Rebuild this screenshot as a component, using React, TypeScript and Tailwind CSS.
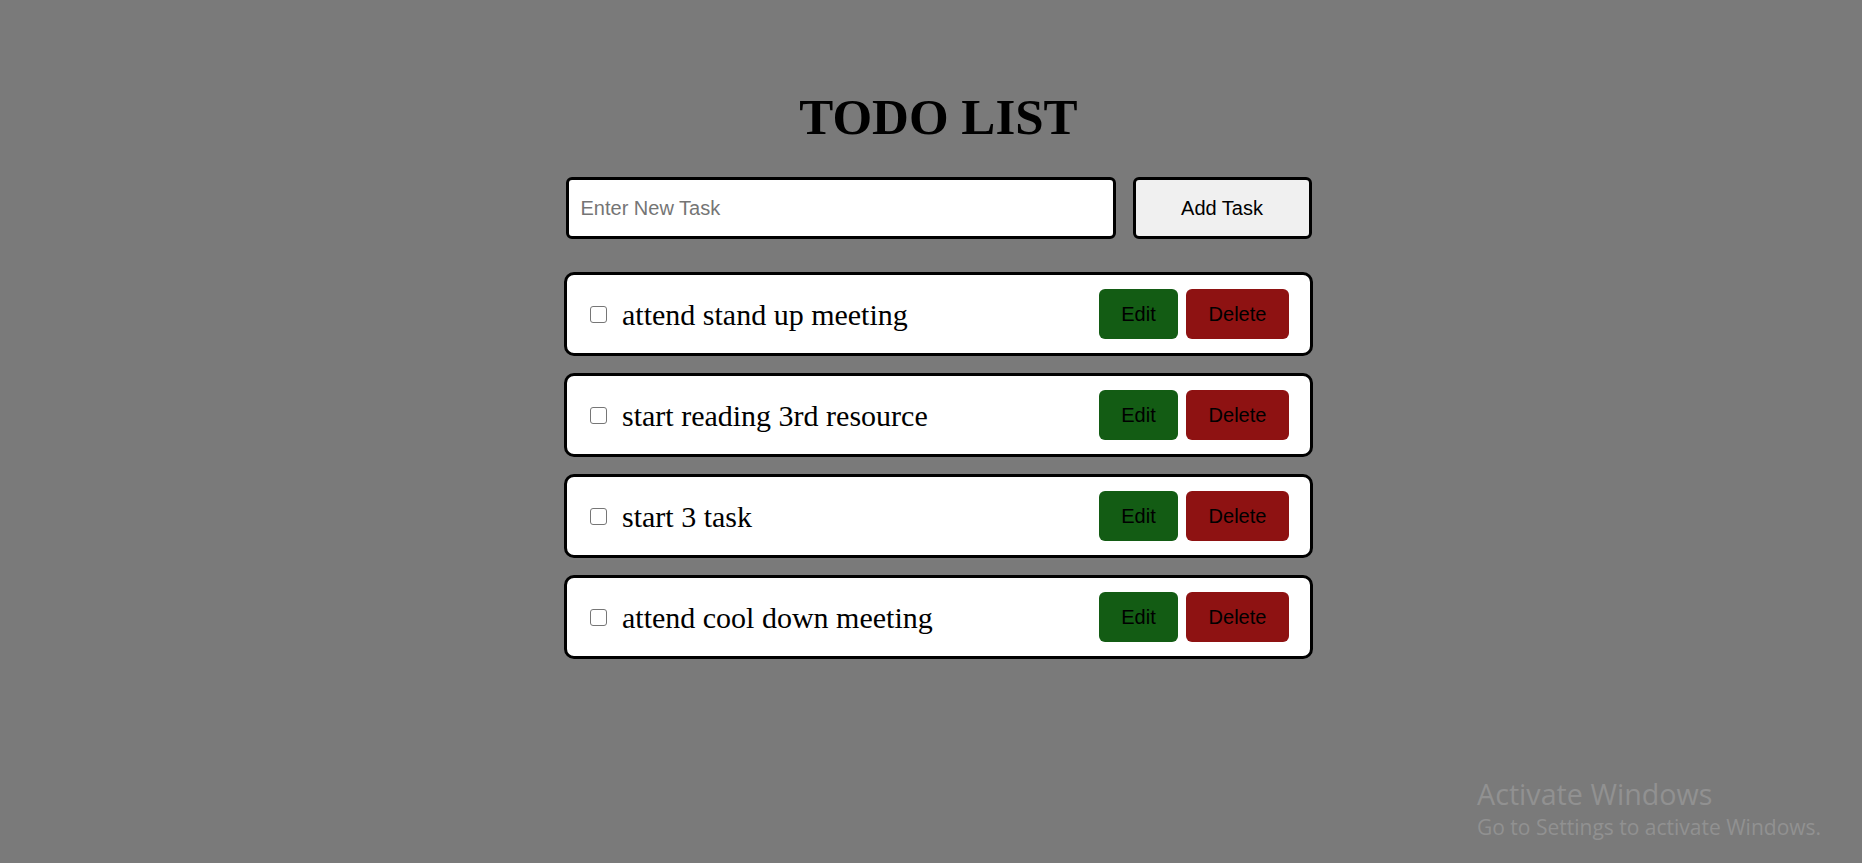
import { useState } from "react";

type Task = { id: number; text: string; done: boolean };

const startTasks: Task[] = [
  { id: 1, text: "attend stand up meeting", done: false },
  { id: 2, text: "start reading 3rd resource", done: false },
  { id: 3, text: "start 3 task", done: false },
  { id: 4, text: "attend cool down meeting", done: false },
];

const App = () => {
  const [tasks, setTasks] = useState<Task[]>(startTasks);
  const [newTask, setNewTask] = useState("");

  const addTask = () => {
    if (!newTask.trim()) return;
    setTasks(prev => [...prev, { id: Date.now(), text: newTask.trim(), done: false }]);
    setNewTask("");
  };

  const toggleTask = (id: number) => {
    setTasks(prev => prev.map(t => (t.id === id ? { ...t, done: !t.done } : t)));
  };

  const deleteTask = (id: number) => {
    setTasks(prev => prev.filter(t => t.id !== id));
  };

  return (
    <div className="relative min-h-screen bg-[#7a7a7a] pl-[15px] font-['Liberation_Sans',Arial,sans-serif] text-black">
      <main className="flex flex-col items-center pt-[92px]">
        <h1 className="font-['Liberation_Serif','Times_New_Roman',serif] text-[51px] leading-[50px] font-bold">
          TODO LIST
        </h1>

        <div className="mt-[35px] flex w-[746px] gap-[17px]">
          <input
            type="text"
            value={newTask}
            onChange={e => setNewTask(e.target.value)}
            placeholder="Enter New Task"
            className="h-[62px] w-[550px] rounded-[6px] border-[3px] border-black bg-white px-3 text-[20px] outline-none placeholder:text-[#757575]"
          />
          <button
            onClick={addTask}
            className="h-[62px] w-[179px] rounded-[6px] border-[3px] border-black bg-[#f0f0f0] text-[20px]"
          >
            Add Task
          </button>
        </div>

        <ul className="mt-[33px] flex w-[749px] flex-col gap-[17px]">
          {tasks.map(task => (
            <li
              key={task.id}
              className="flex h-[84px] items-center rounded-[10px] border-[3px] border-black bg-white pl-[23px] pr-[21px]"
            >
              <input
                type="checkbox"
                checked={task.done}
                onChange={() => toggleTask(task.id)}
                className="m-0 h-[17px] w-[17px] shrink-0 appearance-none rounded-[3px] border-[1.5px] border-[#767676] bg-white checked:bg-[#0075ff] checked:border-[#0075ff]"
              />
              <span className="ml-[15px] flex-1 font-['Liberation_Serif','Times_New_Roman',serif] text-[30px]">
                {task.text}
              </span>
              <div className="flex gap-2">
                <button className="h-[50px] w-[79px] rounded-[6px] bg-[#135c14] text-[20px]">Edit</button>
                <button
                  onClick={() => deleteTask(task.id)}
                  className="h-[50px] w-[103px] rounded-[6px] bg-[#8e1212] text-[20px]"
                >
                  Delete
                </button>
              </div>
            </li>
          ))}
        </ul>
      </main>

      {/* windows watermark */}
      <div className="pointer-events-none absolute left-[1477px] top-[776px] font-['Open_Sans',sans-serif] text-[#919191]">
        <p className="text-[28.7px] leading-[36px]">Activate Windows</p>
        <p className="text-[21px] leading-[31px]">Go to Settings to activate Windows.</p>
      </div>
    </div>
  );
};

export default App;
